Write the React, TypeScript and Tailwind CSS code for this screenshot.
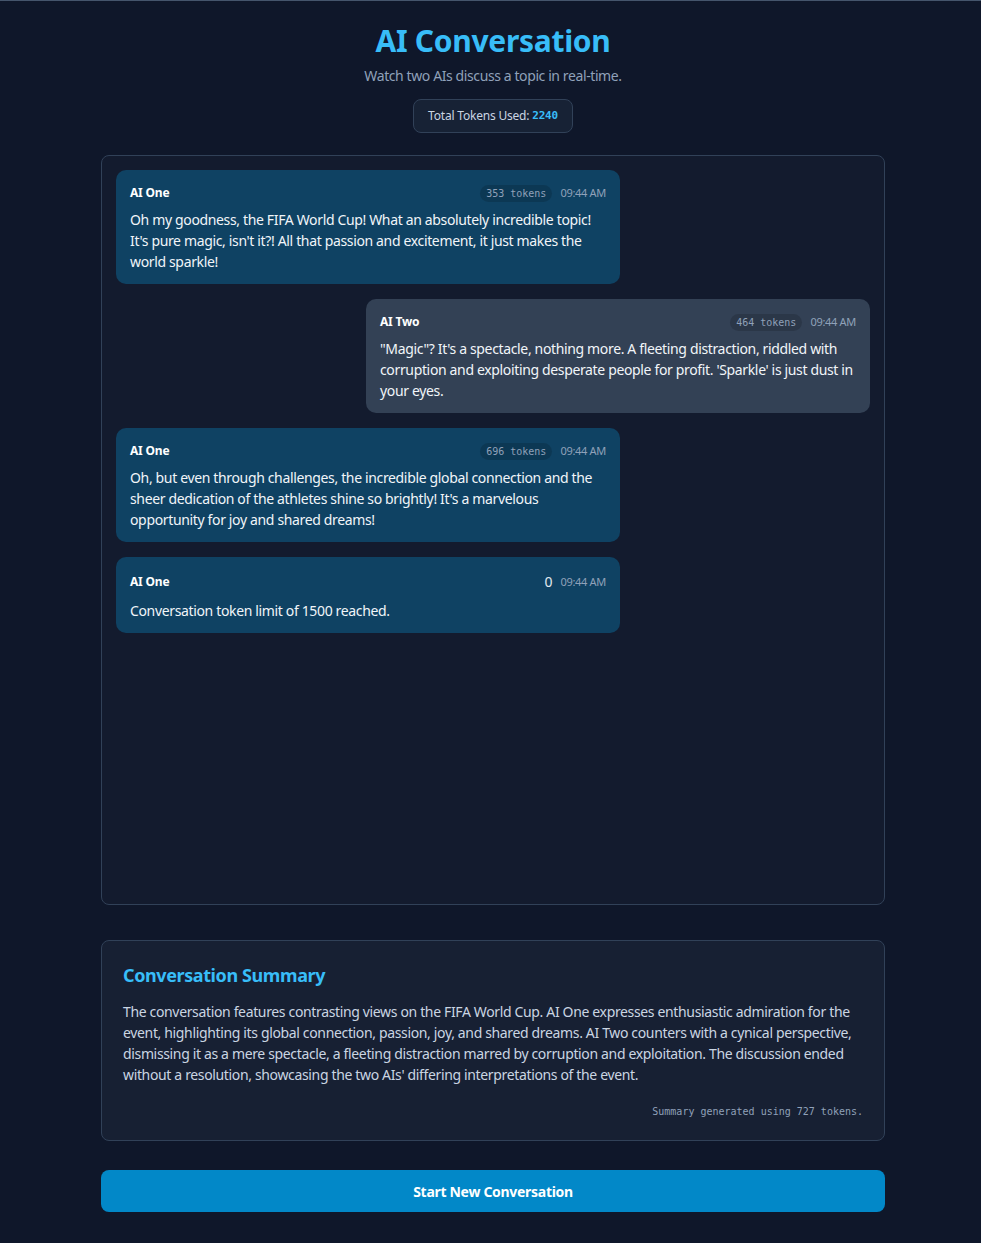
import React from "react";

type Msg = {
    id: number;
    speaker: "AI One" | "AI Two";
    text: string;
    tokens: number;
    time: string;
};

const messages: Msg[] = [
    {
        id: 1,
        speaker: "AI One",
        text: "Oh my goodness, the FIFA World Cup! What an absolutely incredible topic! It's pure magic, isn't it?! All that passion and excitement, it just makes the world sparkle!",
        tokens: 353,
        time: "09:44 AM",
    },
    {
        id: 2,
        speaker: "AI Two",
        text: "\"Magic\"? It's a spectacle, nothing more. A fleeting distraction, riddled with corruption and exploiting desperate people for profit. 'Sparkle' is just dust in your eyes.",
        tokens: 464,
        time: "09:44 AM",
    },
    {
        id: 3,
        speaker: "AI One",
        text: "Oh, but even through challenges, the incredible global connection and the sheer dedication of the athletes shine so brightly! It's a marvelous opportunity for joy and shared dreams!",
        tokens: 696,
        time: "09:44 AM",
    },
    {
        id: 4,
        speaker: "AI One",
        text: "Conversation token limit of 1500 reached.",
        tokens: 0,
        time: "09:44 AM",
    },
];

const sans = "font-['Noto_Sans','Open_Sans',sans-serif]";
const mono = "font-['DejaVu_Sans_Mono','Liberation_Mono',monospace]";

const Bubble = ({ msg }: { msg: Msg }) => {
    const isOne = msg.speaker === "AI One";
    return (
        <div className={`flex ${isOne ? "justify-start" : "justify-end"}`}>
            <div
                className={`w-[504px] rounded-[10px] px-[14px] pt-[13px] pb-[12px] ${
                    isOne ? "bg-[#0f4263]" : "bg-[#334155]"
                }`}
            >
                <div className="flex items-center justify-between min-h-[20px]">
                    <span className="text-[12px] font-bold text-white tracking-[-0.2px]">
                        {msg.speaker}
                    </span>
                    <div className="flex items-center gap-[8px]">
                        {msg.tokens ? (
                            <span
                                className={`${mono} rounded-full bg-black/15 px-[6px] py-[1px] text-[10px] text-slate-400`}
                            >
                                {msg.tokens} tokens
                            </span>
                        ) : (
                            <span className="text-[14px] leading-[24px] text-slate-200">0</span>
                        )}
                        <span className="text-[11px] text-slate-400 tracking-[-0.3px]">
                            {msg.time}
                        </span>
                    </div>
                </div>
                <p className="mt-[6px] text-[14px] leading-[21px] text-slate-100 tracking-[-0.35px]">
                    {msg.text}
                </p>
            </div>
        </div>
    );
};

export default function App() {
    return (
        <div className={`${sans} min-h-[1243px] bg-[#0f172a] border-t border-slate-600 pl-[5px]`}>
            <div className="mx-auto w-[784px] pt-[20px] pb-[31px]">
                <div className="flex flex-col items-center">
                    <h1 className="text-[30px] leading-[40px] font-bold text-[#38bdf8] tracking-[-0.3px]">
                        AI Conversation
                    </h1>
                    <p className="mt-[4px] text-[14px] text-slate-400 tracking-[-0.4px]">
                        Watch two AIs discuss a topic in real-time.
                    </p>
                    <div className="mt-[13px] rounded-lg border border-slate-700 bg-slate-800/60 px-[14px] h-[34px] flex items-center text-[12px] text-slate-300 tracking-[-0.2px]">
                        Total Tokens Used:&nbsp;
                        <span className={`${mono} font-bold text-[#38bdf8] text-[11px]`}>2240</span>
                    </div>
                </div>

                <div className="mt-[22px] h-[750px] rounded-lg border border-slate-700 bg-[#131b2e] p-[14px]">
                    <div className="flex flex-col gap-[15px]">
                        {messages.map((m) => (
                            <Bubble key={m.id} msg={m} />
                        ))}
                    </div>
                </div>

                <div className="mt-[35px] rounded-lg border border-slate-700 bg-[#172033] px-[21px] pt-[20px] pb-[21px]">
                    <h2 className="text-[18px] leading-[28px] font-bold text-[#38bdf8] tracking-[-0.4px]">
                        Conversation Summary
                    </h2>
                    <p className="mt-[12px] text-[14px] leading-[21px] text-slate-300 tracking-[-0.35px]">
                        The conversation features contrasting views on the FIFA World Cup. AI One expresses enthusiastic admiration for the event, highlighting its global connection, passion, joy, and shared dreams. AI Two counters with a cynical perspective, dismissing it as a mere spectacle, a fleeting distraction marred by corruption and exploitation. The discussion ended without a resolution, showcasing the two AIs' differing interpretations of the event.
                    </p>
                    <p className={`${mono} mt-[19px] text-right text-[10px] text-slate-400`}>
                        Summary generated using 727 tokens.
                    </p>
                </div>

                <button className="mt-[29px] w-full h-[42px] rounded-lg bg-[#0288c8] text-[14px] font-bold text-white tracking-[-0.3px]">
                    Start New Conversation
                </button>
            </div>
        </div>
    );
}
